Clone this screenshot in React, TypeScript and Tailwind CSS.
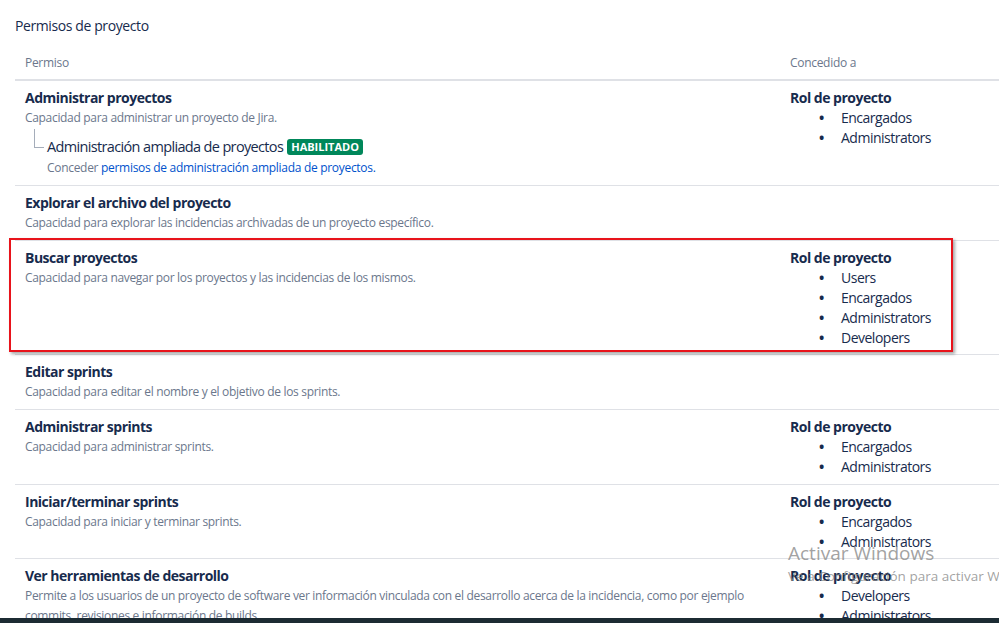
import React from 'react';

type Row = {
  title: string;
  desc: React.ReactNode;
  roles?: string[];
  extra?: React.ReactNode;
  highlight?: boolean;
  tight?: boolean;
};

const rows: Row[] = [
  {
    title: 'Administrar proyectos',
    desc: 'Capacidad para administrar un proyecto de Jira.',
    roles: ['Encargados', 'Administrators'],
    extra: (
      <div className="relative pl-[22px] mt-[8px]">
        <div className="absolute left-[9px] top-[-7px] w-[10px] h-[19px] border-l border-b border-[#a5adba]" />
        <div className="flex items-center gap-[4px] text-[14.5px] leading-[22px] tracking-[-0.65px] text-[#172b4d]">
          Administración ampliada de proyectos
          <span className="bg-[#00875a] text-white text-[11px] font-bold leading-[16px] px-[4px] rounded-[3px] tracking-[0px]">HABILITADO</span>
        </div>
        <div className="text-[12px] leading-[20px] tracking-[-0.3px] text-[#6b778c]">
          Conceder <span className="text-[#0052cc]">permisos de administración ampliada de proyectos.</span>
        </div>
      </div>
    ),
  },
  {
    title: 'Explorar el archivo del proyecto',
    desc: 'Capacidad para explorar las incidencias archivadas de un proyecto específico.',
  },
  {
    title: 'Buscar proyectos',
    desc: 'Capacidad para navegar por los proyectos y las incidencias de los mismos.',
    roles: ['Users', 'Encargados', 'Administrators', 'Developers'],
    highlight: true,
    tight: true,
  },
  {
    title: 'Editar sprints',
    desc: 'Capacidad para editar el nombre y el objetivo de los sprints.',
  },
  {
    title: 'Administrar sprints',
    desc: 'Capacidad para administrar sprints.',
    roles: ['Encargados', 'Administrators'],
  },
  {
    title: 'Iniciar/terminar sprints',
    desc: 'Capacidad para iniciar y terminar sprints.',
    roles: ['Encargados', 'Administrators'],
    tight: true,
  },
  {
    title: 'Ver herramientas de desarrollo',
    desc: (
      <>
        Permite a los usuarios de un proyecto de software ver información vinculada con el desarrollo acerca de la incidencia, como por ejemplo
        <br />
        commits, revisiones e información de builds.
      </>
    ),
    roles: ['Developers', 'Administrators'],
  },
];

export default function App() {
  return (
    <div
      className="w-[999px] h-[623px] overflow-hidden bg-white flex flex-col relative"
      style={{ fontFamily: '"Open Sans", "Noto Sans", sans-serif' }}
    >
      <div className="flex-1 overflow-hidden pl-[15px]">
        <h2 className="text-[14px] leading-[20px] tracking-[-0.4px] text-[#172b4d] pt-[16px]">Permisos de proyecto</h2>

        {/* table header */}
        <div className="flex mt-[17px] border-b-2 border-[#dfe1e6] text-[12px] leading-[20px] tracking-[-0.3px] text-[#6b778c] pb-[6px]">
          <div className="w-[765px] pl-[10px]">Permiso</div>
          <div className="flex-1 pl-[10px]">Concedido a</div>
        </div>

        {rows.map((r) => (
          <div key={r.title} className={`relative flex border-b border-[#dfe1e6] pt-[7px] ${r.tight ? 'pb-[6px]' : 'pb-[7px]'}`}>
            <div className="w-[765px] pl-[10px]">
              <div className="text-[14px] leading-[20px] font-bold tracking-[-0.5px] text-[#172b4d]">{r.title}</div>
              <div className="text-[12px] leading-[20px] tracking-[-0.32px] text-[#6b778c] whitespace-nowrap">{r.desc}</div>
              {r.extra}
            </div>
            <div className="flex-1 pl-[10px]">
              {r.roles && (
                <>
                  <div className="text-[14px] leading-[20px] font-bold tracking-[-0.5px] text-[#172b4d]">Rol de proyecto</div>
                  {r.roles.map((role) => (
                    <div key={role} className="flex text-[14px] leading-[20px] tracking-[-0.5px] text-[#172b4d] pl-[29px]">
                      <span className="w-[22px] font-bold">•</span>
                      <span>{role}</span>
                    </div>
                  ))}
                </>
              )}
            </div>
            {r.highlight && (
              <div className="absolute left-[-6px] top-[-3px] w-[944px] h-[114px] border-2 border-[#e8131b] shadow-[2px_2px_3px_rgba(0,0,0,0.35)] pointer-events-none" />
            )}
          </div>
        ))}
      </div>

      {/* Windows activation watermark */}
      <div className="absolute left-[788px] top-[541px] pointer-events-none whitespace-nowrap text-[#8a8a8a]/80">
        <div className="text-[19px] leading-[24px]">Activar Windows</div>
        <div className="text-[13.5px] leading-[22px]">Ve a Configuración para activar Windows.</div>
      </div>

      <div className="h-[5px] bg-[#1c2b33] shrink-0" />
    </div>
  );
}
